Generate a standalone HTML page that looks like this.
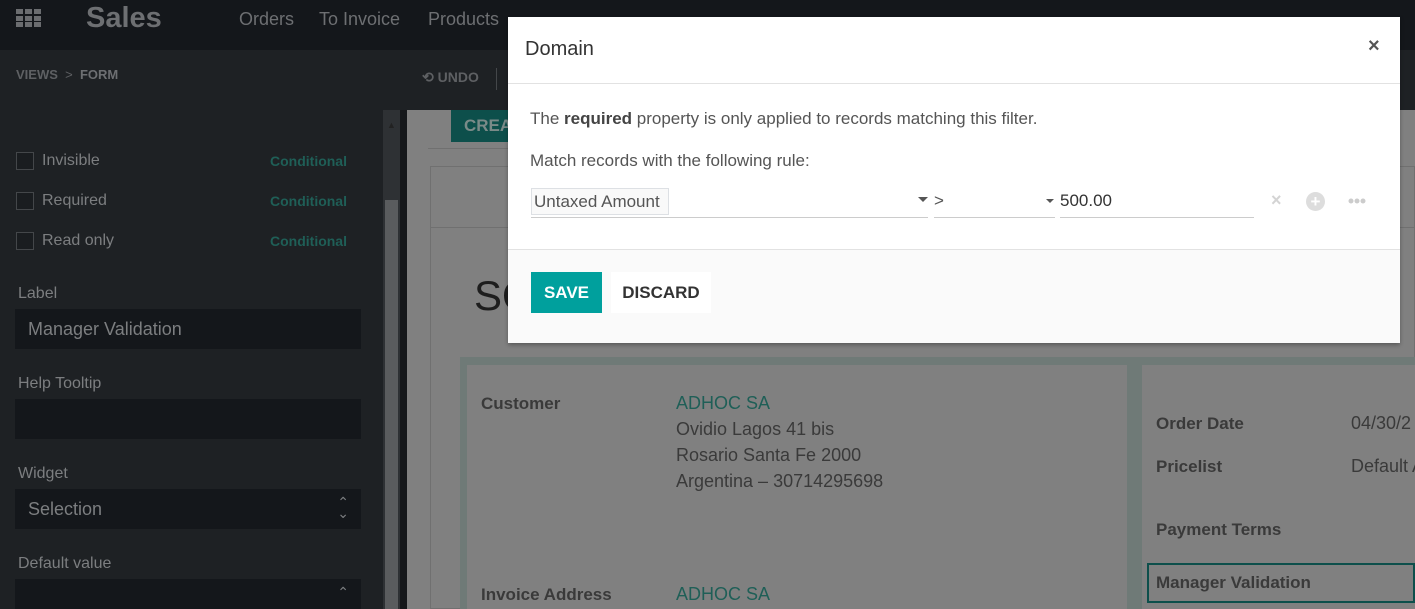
<!DOCTYPE html>
<html style="width:1415px;height:609px;overflow:hidden"><head><style>
*{box-sizing:border-box;margin:0;padding:0}
body{width:1415px;height:609px;overflow:hidden;position:relative;background:#808080;font-family:"Liberation Sans",sans-serif;white-space:nowrap}
.a{position:absolute}
.top{left:0;top:0;width:1415px;height:50px;background:#14171b}
.sub{left:0;top:50px;width:1415px;height:60px;background:#1e2124}
.side{left:0;top:110px;width:383px;height:499px;background:#1e2124}
.lbl{color:#7c7e80;font-size:16px}
.cond{color:#1f5f57;font-size:14px;font-weight:bold}
.cb{width:18px;height:18px;border:1px solid #44474a;background:#1a1d20}
.inp{left:15px;width:346px;height:40px;background:#14171b;color:#7c7e80;font-size:18px;padding:10px 13px;overflow:hidden}
.g{color:#3a3a3a;font-size:17px;font-weight:bold}
.v{color:#3a3a3a;font-size:18px}
.t{color:#1f5f57;font-size:18px}
</style></head><body>
<div class="a top"></div>
<svg class="a" style="left:16px;top:9px" width="26" height="18"><g fill="#6b6d70"><rect x="0" y="0" width="7" height="5"/><rect x="9" y="0" width="7" height="5"/><rect x="18" y="0" width="7" height="5"/><rect x="0" y="7" width="7" height="5"/><rect x="9" y="7" width="7" height="5"/><rect x="18" y="7" width="7" height="5"/><rect x="0" y="13" width="7" height="5"/><rect x="9" y="13" width="7" height="5"/><rect x="18" y="13" width="7" height="5"/></g></svg>
<div class="a" style="left:86px;top:2px;font-size:29px;font-weight:bold;color:#6d6f72">Sales</div>
<div class="a" style="left:239px;top:9px;font-size:18px;color:#6d6f72">Orders</div>
<div class="a" style="left:319px;top:9px;font-size:18px;color:#6d6f72">To Invoice</div>
<div class="a" style="left:428px;top:9px;font-size:18px;color:#6d6f72">Products</div>
<div class="a sub"></div>
<div class="a" style="left:16px;top:67px;font-size:13px;font-weight:bold;color:#5e6063">VIEWS &nbsp;<span style="font-weight:normal">&gt;</span>&nbsp; <span style="color:#6d6f72">FORM</span></div>
<div class="a" style="left:422px;top:69px;font-size:14px;font-weight:bold;color:#5e6063">⟲ UNDO</div>
<div class="a" style="left:496px;top:68px;width:1px;height:22px;background:#44474a"></div>
<div class="a side"></div>
<div class="a" style="left:383px;top:110px;width:17px;height:499px;background:#2e3134"></div>
<div class="a" style="left:385px;top:200px;width:13px;height:409px;background:#5a5c5e"></div>
<div class="a" style="left:387px;top:120px;font-size:9px;color:#222">▲</div>
<div class="a" style="left:400px;top:110px;width:7px;height:499px;background:#15171a"></div>
<div class="a" style="left:407px;top:110px;width:1008px;height:499px;background:#808080"></div>
<div class="a" style="left:451px;top:110px;width:70px;height:32px;background:#0d4f4b;color:#7a8a88;font-weight:bold;font-size:17px;padding:6px 13px">CREA</div>
<div class="a" style="left:428px;top:148px;width:90px;height:1px;background:#707070"></div>
<div class="a" style="left:430px;top:166px;width:985px;height:443px;border:1px solid #707070"></div>
<div class="a" style="left:430px;top:227px;width:985px;height:1px;background:#707070"></div>
<div class="a" style="left:474px;top:272px;font-size:42px;color:#1e1e1e">SO</div>
<div class="a" style="left:460px;top:357px;width:955px;height:252px;background:#6f7a77"></div>
<div class="a" style="left:467px;top:365px;width:660px;height:244px;background:#808080"></div>
<div class="a" style="left:1142px;top:365px;width:273px;height:244px;background:#808080"></div>
<div class="a g" style="left:481px;top:394px">Customer</div>
<div class="a t" style="left:676px;top:393px">ADHOC SA</div>
<div class="a v" style="left:676px;top:419px">Ovidio Lagos 41 bis</div>
<div class="a v" style="left:676px;top:445px">Rosario Santa Fe 2000</div>
<div class="a v" style="left:676px;top:471px">Argentina – 30714295698</div>
<div class="a g" style="left:481px;top:585px">Invoice Address</div>
<div class="a t" style="left:676px;top:584px">ADHOC SA</div>
<div class="a g" style="left:1156px;top:414px">Order Date</div>
<div class="a v" style="left:1351px;top:413px">04/30/2</div>
<div class="a g" style="left:1156px;top:457px">Pricelist</div>
<div class="a v" style="left:1351px;top:456px">Default A</div>
<div class="a g" style="left:1156px;top:520px">Payment Terms</div>
<div class="a" style="left:1147px;top:563px;width:268px;height:40px;border:2px solid #0d4f4b"></div>
<div class="a g" style="left:1156px;top:573px">Manager Validation</div>
<div class="a cb" style="left:16px;top:152px"></div><div class="a lbl" style="left:42px;top:152px">Invisible</div><div class="a cond" style="left:270px;top:153px">Conditional</div>
<div class="a cb" style="left:16px;top:192px"></div><div class="a lbl" style="left:42px;top:192px">Required</div><div class="a cond" style="left:270px;top:193px">Conditional</div>
<div class="a cb" style="left:16px;top:232px"></div><div class="a lbl" style="left:42px;top:232px">Read only</div><div class="a cond" style="left:270px;top:233px">Conditional</div>
<div class="a lbl" style="left:18px;top:285px">Label</div>
<div class="a inp" style="top:309px">Manager Validation</div>
<div class="a lbl" style="left:18px;top:375px">Help Tooltip</div>
<div class="a inp" style="top:399px"></div>
<div class="a lbl" style="left:18px;top:465px">Widget</div>
<div class="a inp" style="top:489px">Selection<span style="position:absolute;right:12px;top:8px;font-size:14px;line-height:11px">⌃<br>⌄</span></div>
<div class="a lbl" style="left:18px;top:555px">Default value</div>
<div class="a inp" style="top:579px;height:30px"><span style="position:absolute;right:12px;top:8px;font-size:14px;line-height:11px">⌃</span></div>
<div class="a" style="left:508px;top:17px;width:892px;height:326px;background:#fff;box-shadow:0 2px 4px rgba(0,0,0,.3)">
 <div class="a" style="left:17px;top:21px;font-size:20px;color:#333">Domain</div>
 <div class="a" style="left:860px;top:18px;font-size:20px;color:#555;font-weight:bold">×</div>
 <div class="a" style="left:0;top:66px;width:892px;height:1px;background:#e2e2e2"></div>
 <div class="a" style="left:22px;top:92px;font-size:17px;color:#555">The <b style="color:#444">required</b> property is only applied to records matching this filter.</div>
 <div class="a" style="left:22px;top:134px;font-size:17px;color:#555">Match records with the following rule:</div>
 <div class="a" style="left:23px;top:200px;width:397px;height:1px;background:#ccc"></div>
 <div class="a" style="left:23px;top:171px;width:138px;height:27px;border:1px solid #dde0e4;background:#f9f9f9;font-size:17px;color:#555;padding:3px 2px">Untaxed Amount</div>
 <div class="a" style="left:410px;top:180px;width:0;height:0;border-left:5px solid transparent;border-right:5px solid transparent;border-top:5px solid #555"></div>
 <div class="a" style="left:426px;top:174px;font-size:17px;color:#555">&gt;</div>
 <div class="a" style="left:426px;top:200px;width:121px;height:1px;background:#ccc"></div>
 <div class="a" style="left:538px;top:182px;width:0;height:0;border-left:4px solid transparent;border-right:4px solid transparent;border-top:4px solid #555"></div>
 <div class="a" style="left:552px;top:174px;font-size:17px;color:#333">500.00</div>
 <div class="a" style="left:552px;top:200px;width:194px;height:1px;background:#ccc"></div>
 <div class="a" style="left:763px;top:173px;font-size:18px;color:#d4d4d4;font-weight:bold">×</div>
 <div class="a" style="left:798px;top:175px;width:19px;height:19px;border-radius:50%;background:#ddd;color:#fff;font-weight:bold;font-size:17px;line-height:19px;text-align:center">+</div>
 <svg class="a" style="left:840px;top:181px" width="18" height="6"><g fill="#ccc"><circle cx="3" cy="3" r="2.5"/><circle cx="9" cy="3" r="2.5"/><circle cx="15" cy="3" r="2.5"/></g></svg>
 <div class="a" style="left:0;top:232px;width:892px;height:94px;background:#fafafa;border-top:1px solid #e2e2e2"></div>
 <div class="a" style="left:23px;top:255px;width:71px;height:41px;background:#00a09d;color:#fff;font-weight:bold;font-size:17px;text-align:center;line-height:41px">SAVE</div>
 <div class="a" style="left:103px;top:255px;width:100px;height:41px;background:#fff;color:#333;font-weight:bold;font-size:17px;text-align:center;line-height:41px">DISCARD</div>
</div>
</body></html>
